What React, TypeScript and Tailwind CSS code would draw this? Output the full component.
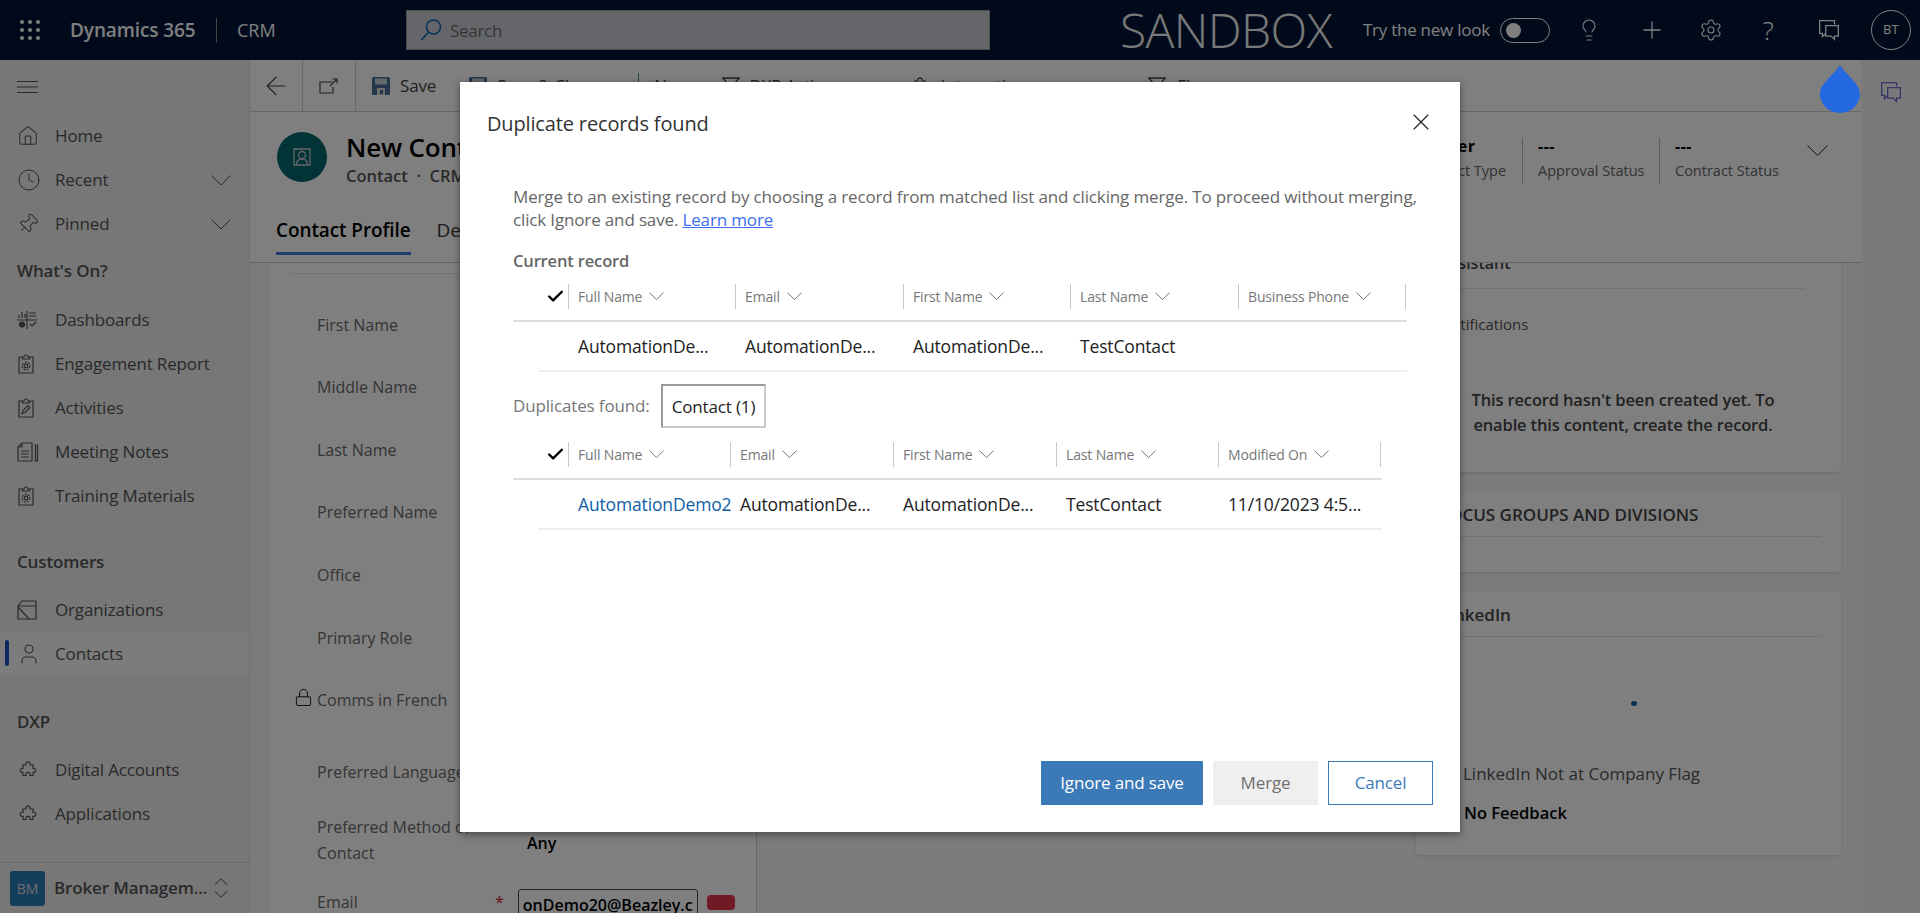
import React from 'react';
import { ArrowLeft, Check, Clock, House, Lightbulb, Lock, Pin, Plus, Settings, User, X } from 'lucide-react';

const Waffle = () => (
  <svg width="20" height="20" viewBox="0 0 20 20" fill="currentColor">
    {[2, 10, 18].map((y) => [2, 10, 18].map((x) => <circle key={`${x}-${y}`} cx={x} cy={y} r="2" />))}
  </svg>
);

const Chev = ({ w, className = '' }: { w: number; className?: string }) => (
  <svg width={w} height={w / 2 + 1} viewBox="0 0 20 11" fill="none" stroke="currentColor" strokeWidth={20 / w} className={`shrink-0 ${className}`}>
    <path d="M.5.500 10 10 19.500.500" />
  </svg>
);

const UpDown = () => (
  <svg width="14" height="20" viewBox="0 0 14 20" fill="none" stroke="currentColor" strokeWidth="1">
    <path d="M.5 7 7 .800 13.500 7M.5 13 7 19.200 13.500 13" />
  </svg>
);

const SearchGlyph = () => (
  <svg width="22" height="24" viewBox="0 0 22 24" fill="none" stroke="currentColor" strokeWidth="1.6">
    <circle cx="13.500" cy="9" r="7" />
    <path d="M8.500 14 1.500 22" />
  </svg>
);

const Chat = ({ size = 20 }: { size?: number }) => (
  <svg width={size} height={size} viewBox="0 0 20 20" fill="none" stroke="currentColor" strokeWidth="1.200">
    <path d="M15 5V1.500H1.500V13H4v3l3-3" />
    <path d="M7 6h11.500v9.500H15v3l-3-3H7z" />
  </svg>
);

const Hamburger = () => (
  <svg width="21" height="12" viewBox="0 0 21 12" stroke="currentColor" strokeWidth="1">
    <path d="M0 .500h21M0 6h21M0 11.500h21" />
  </svg>
);

const OpenWindow = () => (
  <svg width="20" height="16" viewBox="0 0 20 16" fill="none" stroke="currentColor" strokeWidth="1.200">
    <path d="M13 4H1v11h13V9" />
    <path d="M11 8l7-7M13.500 1H18v4.500" />
  </svg>
);

const Floppy = () => (
  <svg width="18" height="18" viewBox="0 0 18 18">
    <path d="M0 1.500A1.500 1.500 0 0 1 1.500 0h15A1.500 1.500 0 0 1 18 1.500v15a1.500 1.500 0 0 1-1.500 1.500h-15A1.500 1.500 0 0 1 0 16.500z" fill="#4b6f96" />
    <path d="M3 1.500h12v6H3z" fill="#c9d2dc" />
    <path d="M5 11h8v7H5z" fill="#d8d8d8" />
    <path d="M8 13h3v4H8z" fill="#4b6f96" />
  </svg>
);

const Funnel = () => (
  <svg width="20" height="20" viewBox="0 0 20 20" fill="none" stroke="currentColor" strokeWidth="1.300">
    <path d="M1 2h18M2 2l8 10 8-10M10 12l-6 6h12z" />
  </svg>
);

const PuzzlePiece = () => (
  <svg width="22" height="18" viewBox="0 0 22 18" fill="none" stroke="currentColor" strokeWidth="1.200">
    <path d="M6 3.500h3a2.200 2.200 0 1 1 4 0h3v3.200a2.200 2.200 0 1 1 0 4.300V14h-3a2.200 2.200 0 1 0-4 0H6v-3a2.200 2.200 0 1 1 0-4.300z" transform="translate(0 .5)" />
  </svg>
);

const ClipGear = () => (
  <svg width="18" height="20" viewBox="0 0 18 20" fill="none" stroke="currentColor" strokeWidth="1.200">
    <path d="M5.500 3H2v16h14V3h-3.500" />
    <path d="M5.500 5V3H7a2 2 0 0 1 4 0h1.500v2z" />
    <circle cx="9" cy="12" r="1.800" />
    <circle cx="9" cy="12" r="3.800" strokeDasharray="2 1.200" />
  </svg>
);

const ClipPen = () => (
  <svg width="18" height="20" viewBox="0 0 18 20" fill="none" stroke="currentColor" strokeWidth="1.200">
    <path d="M5.500 3H2v16h14V3h-3.500" />
    <path d="M5.500 5V3H7a2 2 0 0 1 4 0h1.500v2z" />
    <path d="M5 15.500l1-3 5-5 2 2-5 5z" />
  </svg>
);

const DashGlyph = () => (
  <svg width="20" height="18" viewBox="0 0 20 18" fill="none" stroke="currentColor" strokeWidth="1.200">
    <path d="M0 9h20M10 0v18M2 7V4M5 7V1M8 7V3M12 2h7M12 5h7M13 13l2 2 4-4" />
    <circle cx="5" cy="13.500" r="2.500" fill="currentColor" />
  </svg>
);

const NotesGlyph = () => (
  <svg width="22" height="20" viewBox="0 0 22 20" fill="none" stroke="currentColor" strokeWidth="1.200">
    <path d="M5 1h10v18H1V5zM5 1v4H1M4 9h8M4 12h8M4 15h8" />
    <path d="M18.500 3h2v16h-2z" />
  </svg>
);

const OrgGlyph = () => (
  <svg width="20" height="20" viewBox="0 0 20 20" fill="none" stroke="currentColor" strokeWidth="1.200">
    <path d="M1 6h18v13H1zM1 6l4-5h14v18M1 7l11 12" />
  </svg>
);

const ContactCard = () => (
  <svg width="18" height="18" viewBox="0 0 18 18" fill="none" stroke="currentColor" strokeWidth="1.300">
    <path d="M1 1h16v16H1z" />
    <circle cx="9" cy="7" r="3.500" />
    <path d="M3.500 17c0-4 2-6 5.500-6s5.500 2 5.500 6" />
  </svg>
);

const Drop = () => (
  <svg width="40" height="48" viewBox="0 0 40 48" fill="#2468e2">
    <path d="M20 0c3 7 20 18 20 29a20 19 0 0 1-40 0C0 18 17 7 20 0z" />
  </svg>
);

const navTop = [
  { label: 'Home', icon: <House size={22} strokeWidth={1.100} />, more: false },
  { label: 'Recent', icon: <Clock size={24} strokeWidth={1} />, more: true },
  { label: 'Pinned', icon: <Pin size={22} strokeWidth={1.100} className="rotate-45" />, more: true },
];

const navWork = [
  { label: 'Dashboards', icon: <DashGlyph /> },
  { label: 'Engagement Report', icon: <ClipGear /> },
  { label: 'Activities', icon: <ClipPen /> },
  { label: 'Meeting Notes', icon: <NotesGlyph /> },
  { label: 'Training Materials', icon: <ClipGear /> },
];

function NavRow({ label, icon, more, active }: { label: string; icon: React.ReactNode; more?: boolean; active?: boolean }) {
  return (
    <div className={`relative flex h-[44px] items-center pl-[17px] pr-[18px] text-[17px] tracking-[-0.15px] text-[#555] ${active ? 'bg-[#f8f8f8]' : ''}`}>
      {active && <span className="absolute left-[5px] top-[8px] h-[26px] w-[4px] rounded-sm bg-[#1c4fc0]" />}
      <span className="flex w-[38px] shrink-0 items-center justify-start">{icon}</span>
      <span className="flex-1 whitespace-nowrap">{label}</span>
      {more && <Chev w={20} />}
    </div>
  );
}

function SideHeading({ label, className }: { label: string; className: string }) {
  return <div className={`flex items-end pl-[17px] text-[17px] font-semibold tracking-[-0.15px] text-[#555] ${className}`}>{label}</div>;
}

function Sidebar() {
  return (
    <aside className="flex w-[250px] shrink-0 flex-col border-r border-[#e0e0e0] bg-[#eeeeee]">
      <div className="flex h-[54px] items-center pl-[17px] text-[#555]">
        <Hamburger />
      </div>
      {navTop.map((n) => (
        <NavRow key={n.label} {...n} />
      ))}
      <SideHeading label="What's On?" className="h-[52px] pb-[15px]" />
      {navWork.map((n) => (
        <NavRow key={n.label} {...n} />
      ))}
      <SideHeading label="Customers" className="h-[70px] pb-[14px]" />
      <NavRow label="Organizations" icon={<OrgGlyph />} />
      <NavRow label="Contacts" icon={<User size={24} strokeWidth={1.100} />} active />
      <SideHeading label="DXP" className="h-[72px] pb-[14px]" />
      <NavRow label="Digital Accounts" icon={<PuzzlePiece />} />
      <NavRow label="Applications" icon={<PuzzlePiece />} />
      <div className="flex-1" />
      <div className="flex h-[51px] items-center border-t border-[#d8d8d8] pl-[10px] text-[#555]">
        <span className="flex h-[35px] w-[35px] items-center justify-center rounded-[3px] bg-[#2a7ab8] text-[14px] text-[#ddd]">BM</span>
        <span className="ml-[9px] w-[160px] whitespace-nowrap text-[17px] font-semibold tracking-[-0.15px]">Broker Managem...</span>
        <UpDown />
      </div>
    </aside>
  );
}

function TopBar() {
  return (
    <header className="flex h-[60px] shrink-0 items-center bg-[#011536] text-white">
      <span className="ml-[20px] w-[50px] shrink-0"><Waffle /></span>
      <span className="w-[146px] whitespace-nowrap text-[19px] font-semibold tracking-[-0.1px]">Dynamics 365</span>
      <span className="h-[25px] w-px bg-[#888]" />
      <span className="ml-[20px] w-[169px] text-[18px]">CRM</span>
      <div className="flex h-[40px] w-[584px] items-center border border-[#999] bg-[#c8ccd2] pl-[13px] text-[#0d66aa]">
        <SearchGlyph />
        <span className="ml-[8px] pt-[1px] text-[17px] tracking-[-0.3px] text-[#6a6a6a]">Search</span>
      </div>
      <span className="ml-[130px] whitespace-nowrap text-[48px] font-light leading-none tracking-[-0.6px] text-[#f0f0f0]">SANDBOX</span>
      <span className="ml-[31px] whitespace-nowrap text-[17px] tracking-[-0.25px]">Try the new look</span>
      <span className="ml-[10px] flex h-[25px] w-[50px] items-center rounded-full border border-white pl-[5px]">
        <span className="h-[15px] w-[15px] rounded-full bg-white" />
      </span>
      <span className="ml-[27px] w-[61px]"><Lightbulb size={24} strokeWidth={1.100} /></span>
      <span className="w-[60px]"><Plus size={28} strokeWidth={1.100} /></span>
      <span className="w-[60px] pl-[1px]"><Settings size={24} strokeWidth={1.100} /></span>
      <span className="w-[60px] pl-[5px] text-[26px] font-light leading-none">?</span>
      <span className="w-[53px]"><Chat size={22} /></span>
      <span className="flex h-[40px] w-[40px] items-center justify-center rounded-full border border-white text-[13px]">BT</span>
    </header>
  );
}

function CommandBar() {
  return (
    <div className="flex h-[52px] shrink-0 items-center border-b border-[#d0d0d0] bg-white text-[17px] tracking-[-0.15px] text-[#444]">
      <span className="flex h-full w-[53px] items-center justify-center border-r border-[#d0d0d0]"><ArrowLeft size={30} strokeWidth={0.900} /></span>
      <span className="flex h-full w-[53px] items-center justify-center border-r border-[#d0d0d0]"><OpenWindow /></span>
      <span className="ml-[16px] flex items-center gap-[10px]"><Floppy />Save</span>
      <span className="ml-[33px] flex items-center gap-[10px] whitespace-nowrap"><Floppy />Save &amp; Close</span>
      <span className="ml-[42px] h-[26px] w-px bg-[#3aa060]" />
      <span className="ml-[15px]">New</span>
      <span className="ml-[32px] flex items-center gap-[8px] whitespace-nowrap"><Funnel />DXP Actions</span>
      <span className="ml-[66px] flex items-center gap-[10px] whitespace-nowrap"><PuzzlePiece />Integrations</span>
      <span className="ml-[113px] flex items-center gap-[10px] whitespace-nowrap"><Funnel />Flow</span>
    </div>
  );
}

function HeaderField({ value, label, divided, width }: { value: string; label: string; divided?: boolean; width: string }) {
  return (
    <div className={`flex h-[46px] flex-col pl-[15px] ${width} ${divided ? 'border-r border-[#bbb]' : ''}`}>
      <span className="text-[16px] font-bold leading-[16px] tracking-[0.5px] text-black">{value}</span>
      <span className="whitespace-nowrap text-[14.5px] leading-[34px] text-[#666]">{label}</span>
    </div>
  );
}

function RecordHeader() {
  return (
    <div className="h-[151px] shrink-0 border-b border-[#c8c8c8] bg-white">
      <div className="flex h-[90px] pt-[20px]">
        <span className="ml-[27px] flex h-[50px] w-[50px] items-center justify-center rounded-full bg-[#05686f] text-[#ccc]">
          <ContactCard />
        </span>
        <div className="ml-[19px] w-[400px]">
          <div className="whitespace-nowrap text-[26px] font-semibold leading-[30px] tracking-[-0.2px] text-black">New Contact</div>
          <div className="whitespace-nowrap text-[16.5px] font-semibold leading-[28px] text-[#555]">Contact &nbsp;·&nbsp; CRM</div>
        </div>
        <div className="ml-[657px] flex pt-[6px]">
          <HeaderField value="Broker" label="Contact Type" width="w-[120px]" divided />
          <HeaderField value="---" label="Approval Status" width="w-[137px]" divided />
          <HeaderField value="---" label="Contract Status" width="w-[143px]" />
          <Chev w={21} className="ml-[4px] mt-[7px] text-[#222]" />
        </div>
      </div>
      <div className="flex h-[61px] pl-[26px]">
        <span className="flex h-[53px] items-center border-b-[3px] border-[#3a7ae0] pt-[6px] text-[19px] font-semibold tracking-[-0.1px] whitespace-nowrap text-black">Contact Profile</span>
        <span className="ml-[26px] flex h-[50px] items-center pt-[6px] text-[19px] text-[#333]">Details</span>
      </div>
    </div>
  );
}

function FormRow({ label, h, locked, children }: { label: string; h: string; locked?: boolean; children?: React.ReactNode }) {
  return (
    <div className={`flex items-center pl-[47px] text-[16px] text-[#6a6a6a] ${h}`}>
      {locked && <Lock size={19} strokeWidth={1.300} className="-ml-[23px] mr-[4px] mb-[5px] text-[#222]" />}
      <span className="w-[170px] shrink-0 whitespace-normal leading-[26px]">{label}</span>
      {children}
    </div>
  );
}

function FormCard() {
  return (
    <section className="ml-[20px] w-[487px] shrink-0 border-r border-[#d0d0d0] bg-white">
      <div className="ml-[20px] mt-[10px] h-[21px] border-t border-[#e8e8e8]" />
      <FormRow label="First Name" h="h-[62px]" />
      <FormRow label="Middle Name" h="h-[62px]" />
      <FormRow label="Last Name" h="h-[63px]" />
      <FormRow label="Preferred Name" h="h-[62px]" />
      <FormRow label="Office" h="h-[63px]" />
      <FormRow label="Primary Role" h="h-[63px]" />
      <FormRow label="Comms in French" h="h-[62px]" locked />
      <FormRow label="Preferred Language" h="h-[82px]" />
      <FormRow label="Preferred Method of Contact" h="h-[54px]">
        <span className="ml-[40px] pt-[6px] text-[16px] font-semibold text-black">Any</span>
      </FormRow>
      <FormRow label="Email" h="h-[70px]">
        <span className="ml-[8px] mr-[14px] text-[#c81e1e]">*</span>
        <span className="mt-[6px] flex h-[32px] w-[180px] items-center overflow-hidden rounded-[3px] border border-[#444] pl-[4px] text-[16px] font-semibold whitespace-nowrap text-black">onDemo20@Beazley.c</span>
        <span className="ml-[9px] h-[15px] w-[28px] rounded-[4px] bg-[#e0344a]" />
      </FormRow>
    </section>
  );
}

function SideCards() {
  return (
    <div className="ml-auto mr-[20px] -mt-[25px] flex w-[425px] shrink-0 flex-col gap-[20px] text-[#555]">
      <section className="h-[234px] shrink-0 rounded-[4px] bg-white pl-[24px] shadow-sm">
        <div className="mr-[37px] h-[51px] border-b border-[#e4e4e4] pt-[13px] text-[16px] font-semibold leading-[24px] text-[#444]">Assistant</div>
        <div className="pt-[25px] text-[15px] leading-[20px]">Notifications</div>
        <div className="ml-[18px] mt-[53px] w-[330px] text-center text-[16.5px] font-semibold leading-[25px] tracking-[-0.15px] text-[#444]">This record hasn't been created yet. To enable this content, create the record.</div>
      </section>
      <section className="h-[80px] shrink-0 rounded-[4px] bg-white pl-[24px] shadow-sm">
        <div className="mr-[20px] flex h-[45px] items-center border-b border-[#e4e4e4] pt-[2px] text-[17px] font-semibold whitespace-nowrap text-[#444]">FOCUS GROUPS AND DIVISIONS</div>
      </section>
      <section className="h-[263px] shrink-0 rounded-[4px] bg-white pl-[24px] shadow-sm">
        <div className="mr-[20px] flex h-[45px] items-center border-b border-[#e4e4e4] pt-[2px] text-[17px] font-semibold text-[#444]">LinkedIn</div>
        <div className="flex h-[100px] items-center justify-center pt-[32px]">
          <span className="mr-[14px] h-[5px] w-[6px] rounded-full bg-[#0f62a8]" />
        </div>
        <div className="mt-[25px] pl-[23px] text-[17px] leading-[24px]">LinkedIn Not at Company Flag</div>
        <div className="mt-[15px] pl-[24px] text-[16.5px] font-semibold leading-[24px] text-black">No Feedback</div>
      </section>
    </div>
  );
}

type Col = { label: string; cell?: string; link?: boolean };

function MiniTable({ grid, width, columns }: { grid: string; width: string; columns: Col[] }) {
  return (
    <div className={width}>
      <div className={`grid h-[38px] items-start border-b-2 border-[#dedede] ${grid}`}>
        <div className="flex h-[25px] items-center justify-end border-r border-[#c8c8c8] pr-[3px] text-black">
          <Check size={19} strokeWidth={3} />
        </div>
        {columns.map((c) => (
          <div key={c.label} className="flex h-[25px] items-center gap-[7px] border-r border-[#c8c8c8] pl-[9px] text-[14px] text-[#777]">
            <span className="whitespace-nowrap">{c.label}</span>
            <Chev w={15} />
          </div>
        ))}
      </div>
      <div className={`grid h-[48px] items-center ${grid}`}>
        <div />
        {columns.map((c) => (
          <div key={c.label} className={`overflow-hidden pl-[9px] text-[17.5px] whitespace-nowrap ${c.link ? 'text-[#0f5ea8]' : 'text-[#222]'}`}>
            {c.cell}
          </div>
        ))}
      </div>
      <div className="ml-[25px] h-[2px] bg-[#f0f0f0]" />
    </div>
  );
}

const currentCols: Col[] = [
  { label: 'Full Name', cell: 'AutomationDe...' },
  { label: 'Email', cell: 'AutomationDe...' },
  { label: 'First Name', cell: 'AutomationDe...' },
  { label: 'Last Name', cell: 'TestContact' },
  { label: 'Business Phone', cell: '' },
];

const duplicateCols: Col[] = [
  { label: 'Full Name', cell: 'AutomationDemo20@Beazley.com', link: true },
  { label: 'Email', cell: 'AutomationDe...' },
  { label: 'First Name', cell: 'AutomationDe...' },
  { label: 'Last Name', cell: 'TestContact' },
  { label: 'Modified On', cell: '11/10/2023 4:5...' },
];

function DuplicateDialog() {
  return (
    <div role="dialog" className="mt-[1px] flex h-[750px] w-[1000px] flex-col bg-white tracking-[-0.15px] shadow-[0_2px_8px_rgba(0,0,0,0.45)]">
      <div className="flex h-[74px] shrink-0 items-center justify-between pl-[27px] pr-[25px] pt-[10px]">
        <h1 className="text-[20px] text-[#333]">Duplicate records found</h1>
        <X size={28} strokeWidth={1} className="mb-[5px] text-[#222]" />
      </div>
      <div className="flex-1 pl-[53px]">
        <p className="mt-[29px] w-[915px] text-[17px] leading-[23px] text-[#666]">
          Merge to an existing record by choosing a record from matched list and clicking merge. To proceed without merging, click Ignore and save. <a className="text-[#3b6ef0] underline">Learn more</a>
        </p>
        <h2 className="mt-[18px] mb-[11px] text-[16.5px] font-semibold leading-[24px] text-[#666]">Current record</h2>
        <MiniTable width="w-[894px]" grid="grid-cols-[56px_167px_168px_167px_168px_167px]" columns={currentCols} />
        <div className="mt-[12px] mb-[14px] flex h-[44px] items-center text-[17px] text-[#777]">
          <span className="w-[148px] whitespace-nowrap">Duplicates found:</span>
          <span className="flex h-[44px] w-[105px] items-center justify-center border-2 border-t-[#999] border-l-[#999] border-r-[#ccc] border-b-[#ccc] pt-[2px] whitespace-nowrap text-[#222]">Contact (1)</span>
        </div>
        <MiniTable width="w-[869px]" grid="grid-cols-[56px_162px_163px_163px_162px_162px]" columns={duplicateCols} />
      </div>
      <div className="flex shrink-0 justify-end gap-[10px] pb-[27px] pr-[27px] text-[17px]">
        <button className="h-[44px] w-[162px] bg-[#3b79b7] text-white">Ignore and save</button>
        <button className="h-[44px] w-[105px] bg-[#efefef] text-[#6f6f6f]">Merge</button>
        <button className="h-[44px] w-[105px] border border-[#3b79b7] text-[#3b79b7]">Cancel</button>
      </div>
    </div>
  );
}

export default function App() {
  return (
    <div className="relative flex h-screen flex-col overflow-hidden bg-[#f6f6f6] font-['Open_Sans',sans-serif]">
      <TopBar />
      <div className="flex min-h-0 flex-1">
        <Sidebar />
        <main className="flex min-w-0 flex-1 flex-col">
          <CommandBar />
          <RecordHeader />
          <div className="flex min-h-0 flex-1 overflow-hidden">
            <FormCard />
            <SideCards />
          </div>
        </main>
        <div className="flex w-[59px] shrink-0 justify-center bg-[#f4f4f4] pt-[21px] text-[#6a6ad0]">
          <Chat size={22} />
        </div>
      </div>
      {/* modal scrim, everything under it gets halved */}
      <div className="absolute inset-0 z-10 flex items-center justify-center bg-black/50">
        <DuplicateDialog />
      </div>
      <span className="absolute left-[1820px] top-[65px] z-20"><Drop /></span>
    </div>
  );
}
